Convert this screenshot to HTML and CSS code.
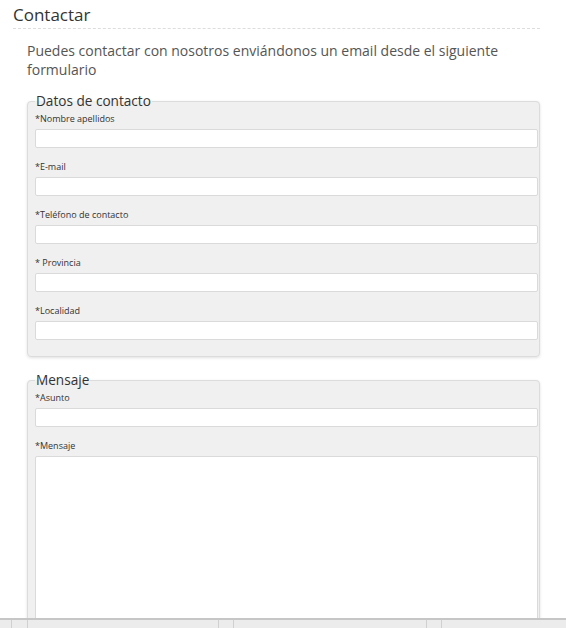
FILE: index.html
```html
<!DOCTYPE html>
<html lang="es">
<head>
<meta charset="utf-8">
<title>Contactar</title>
<link rel="stylesheet" href="styles.css">
</head>
<body>
<div class="page">
  <h1 class="title">Contactar</h1>
  <div class="content">
    <p class="intro">Puedes contactar con nosotros enviándonos un email desde el siguiente formulario</p>
    <form class="form">
      <fieldset class="box">
        <legend class="legend">Datos de contacto</legend>
        <div class="field">
          <label class="label">*Nombre apellidos</label>
          <input class="input" type="text">
        </div>
        <div class="field">
          <label class="label">*E-mail</label>
          <input class="input" type="text">
        </div>
        <div class="field">
          <label class="label">*Teléfono de contacto</label>
          <input class="input" type="text">
        </div>
        <div class="field">
          <label class="label">* Provincia</label>
          <input class="input" type="text">
        </div>
        <div class="field">
          <label class="label">*Localidad</label>
          <input class="input" type="text">
        </div>
      </fieldset>
      <fieldset class="box box-msg">
        <legend class="legend">Mensaje</legend>
        <div class="field">
          <label class="label">*Asunto</label>
          <input class="input" type="text">
        </div>
        <div class="field">
          <label class="label">*Mensaje</label>
          <textarea class="textarea"></textarea>
        </div>
      </fieldset>
    </form>
  </div>
</div>
<div class="bottombar">
  <span class="seg seg-a"></span>
  <span class="seg seg-b"></span>
  <span class="seg seg-c"></span>
  <span class="seg seg-d"></span>
  <span class="seg seg-e"></span>
  <span class="seg seg-f"></span>
  <span class="seg seg-g"></span>
</div>
</body>
</html>
```
FILE: styles.css
```css
html, body {
  margin: 0;
  padding: 0;
  background: #fff;
}
body {
  font-family: "Open Sans", "DejaVu Sans", sans-serif;
  color: #333;
  overflow: hidden;
  height: 628px;
}
.page {
  padding: 3px 26px 0 13px;
}
.title {
  margin: 0;
  font-size: 17px;
  font-weight: 400;
  line-height: 24px;
  color: #333;
  padding-bottom: 1px;
  border-bottom: 1px dashed #ddd;
}
.content {
  padding-left: 14px;
}
.intro {
  margin: 12px 0 0;
  font-size: 14px;
  line-height: 19px;
  color: #555;
}
.form {
  margin-top: 14px;
}
.box {
  margin: 0;
  padding: 3px 1px 16px 7px;
  border: 1px solid #dcdcdc;
  border-radius: 4px;
  background: #f0f0f0;
  box-shadow: 0 1px 3px rgba(0, 0, 0, 0.12);
  min-width: 0;
}
.box-msg {
  margin-top: 15px;
}
.legend {
  padding: 0 1px;
  font-size: 13.6px;
  line-height: 16px;
  color: #333;
}
.field {
  display: flex;
  flex-direction: column;
  margin-top: 12px;
}
.field:first-of-type {
  margin-top: 0;
}
.label {
  font-size: 9px;
  line-height: 12px;
  color: #333;
  padding-top: 1px;
  margin-bottom: 4px;
}
.input {
  box-sizing: border-box;
  height: 19px;
  width: 100%;
  margin: 0;
  border: 1px solid #dadada;
  border-radius: 2px;
  background: #fff;
  padding: 0 4px;
}
.textarea {
  box-sizing: border-box;
  display: block;
  height: 172px;
  width: 100%;
  margin: 0;
  border: 1px solid #dadada;
  border-radius: 2px;
  background: #fff;
  resize: none;
}
.bottombar {
  position: fixed;
  left: 0;
  right: 0;
  bottom: 0;
  height: 8px;
  display: flex;
  border-top: 2px solid #c6c6c6;
  background: #ececec;
}
.seg {
  height: 100%;
  box-sizing: border-box;
  border-right: 1px solid #d0d0d0;
}
.seg-a { width: 12px; }
.seg-b { width: 16px; }
.seg-c { width: 191px; }
.seg-d { width: 15px; }
.seg-e { width: 193px; }
.seg-f { width: 15px; }
.seg-g { flex: 1; border-right: 0; }
```
